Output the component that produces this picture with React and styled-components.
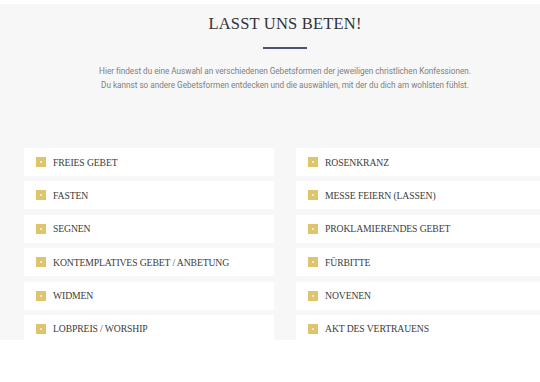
import React from "react";
import styled, { createGlobalStyle } from "styled-components";

const GlobalStyle = createGlobalStyle`
  html, body {
    margin: 0;
    padding: 0;
    background: #ffffff;
    overflow: hidden;
  }
`;

const Section = styled.section`
  margin-top: 4px;
  width: 570px;
  height: 336px;
  overflow: hidden;
  background: #f7f7f7;
  box-sizing: border-box;
  padding: 10px 24px 0;
  display: flex;
  flex-direction: column;
  align-items: center;
  & > * {
    flex-shrink: 0;
  }
`;

const Title = styled.h2`
  margin: 0;
  font-family: "Liberation Serif", "Times New Roman", serif;
  font-weight: 400;
  font-size: 16.5px;
  line-height: 20px;
  letter-spacing: 0.2px;
  color: #333333;
`;

const Rule = styled.div`
  width: 44px;
  height: 2px;
  margin-top: 13px;
  background: #4b5272;
`;

const Intro = styled.p`
  margin: 15px 0 0;
  font-family: Roboto, "Liberation Sans", sans-serif;
  font-size: 8.2px;
  line-height: 14px;
  letter-spacing: -0.02px;
  color: #808080;
  text-align: center;
`;

const Grid = styled.div`
  align-self: stretch;
  margin-top: 56px;
  display: grid;
  grid-template-columns: 250px 250px;
  column-gap: 22px;
  row-gap: 5.4px;
`;

const Card = styled.div`
  height: 28px;
  background: #ffffff;
  display: flex;
  align-items: center;
  padding-left: 12px;
  box-sizing: border-box;
  font-family: "Liberation Serif", "Times New Roman", serif;
  font-size: 9.7px;
  letter-spacing: -0.12px;
  color: #3c3c3c;
  text-transform: uppercase;
`;

const Toggle = styled.span`
  width: 10px;
  height: 10px;
  flex: none;
  margin-right: 7px;
  background: #dfc46e;
  position: relative;
  &::after {
    content: "";
    position: absolute;
    left: 4px;
    top: 4px;
    width: 2px;
    height: 2px;
    background: #f6ecc9;
  }
`;

const prayers = [
  "Freies Gebet",
  "Rosenkranz",
  "Fasten",
  "Messe feiern (lassen)",
  "Segnen",
  "Proklamierendes Gebet",
  "Kontemplatives Gebet / Anbetung",
  "Fürbitte",
  "Widmen",
  "Novenen",
  "Lobpreis / Worship",
  "Akt des Vertrauens",
];

export default function App() {
  return (
    <>
      <GlobalStyle />
      <Section>
        <Title>LASST UNS BETEN!</Title>
        <Rule />
        <Intro>
          Hier findest du eine Auswahl an verschiedenen Gebetsformen der jeweiligen christlichen Konfessionen.
          <br />
          Du kannst so andere Gebetsformen entdecken und die auswählen, mit der du dich am wohlsten fühlst.
        </Intro>
        <Grid>
          {prayers.map((p) => (
            <Card key={p}>
              <Toggle />
              {p}
            </Card>
          ))}
        </Grid>
      </Section>
    </>
  );
}
